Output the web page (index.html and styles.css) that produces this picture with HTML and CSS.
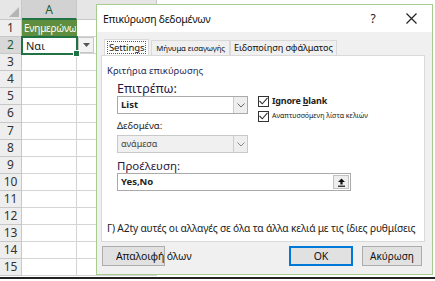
FILE: index.html
```html
<!DOCTYPE html>
<html lang="el">
<head>
    <meta charset="UTF-8">
    <title>Επικύρωση δεδομένων</title>
    <link rel="stylesheet" href="styles.css">
</head>
<body>
    <div class="workbook">
        <div class="sheet">
            <div class="hd corner"><span class="corner-tri"></span></div>
            <div class="hd col selected">A</div>
            <div class="hd col"></div>

            <div class="rn">1</div><div class="cell header-cell">Ενημερώνω</div><div class="cell"></div>
            <div class="rn row-sel">2</div><div class="cell active-cell">Ναι<span class="fill-handle"></span></div><div class="cell"><span class="cell-drop"><svg width="7" height="4" viewBox="0 0 7 4"><path d="M0 0h7L3.5 4z" fill="#555"/></svg></span></div>
            <div class="rn">3</div><div class="cell"></div><div class="cell"></div>
            <div class="rn">4</div><div class="cell"></div><div class="cell"></div>
            <div class="rn">5</div><div class="cell"></div><div class="cell"></div>
            <div class="rn">6</div><div class="cell"></div><div class="cell"></div>
            <div class="rn">7</div><div class="cell"></div><div class="cell"></div>
            <div class="rn">8</div><div class="cell"></div><div class="cell"></div>
            <div class="rn">9</div><div class="cell"></div><div class="cell"></div>
            <div class="rn">10</div><div class="cell"></div><div class="cell"></div>
            <div class="rn">11</div><div class="cell"></div><div class="cell"></div>
            <div class="rn">12</div><div class="cell"></div><div class="cell"></div>
            <div class="rn">13</div><div class="cell"></div><div class="cell"></div>
            <div class="rn">14</div><div class="cell"></div><div class="cell"></div>
            <div class="rn">15</div><div class="cell"></div><div class="cell"></div>
        </div>

        <div class="dialog">
            <div class="title-bar">
                <span class="title">Επικύρωση δεδομένων</span>
                <span class="help">?</span>
                <span class="close">
                    <svg width="11" height="11" viewBox="0 0 11 11"><path d="M0.5 0.5l10 10M10.5 0.5l-10 10" stroke="#222" stroke-width="1.2"/></svg>
                </span>
            </div>

            <div class="tabs">
                <div class="tab active"><span class="focus">Settings</span></div>
                <div class="tab small">Μήνυμα εισαγωγής</div>
                <div class="tab">Ειδοποίηση σφάλματος</div>
            </div>

            <div class="panel">
                <div class="group-label">Κριτήρια επικύρωσης</div>
                <div class="criteria">
                    <div class="left-col">
                        <div class="label-big">Επιτρέπω:</div>
                        <div class="combo">
                            <span class="combo-value bold">List</span>
                            <span class="combo-btn"><svg width="8" height="5" viewBox="0 0 8 5"><path d="M0.5 0.5L4 4l3.5-3.5" fill="none" stroke="#666"/></svg></span>
                        </div>
                        <div class="label-small">Δεδομένα:</div>
                        <div class="combo disabled">
                            <span class="combo-value">ανάμεσα</span>
                            <span class="combo-btn"><svg width="8" height="5" viewBox="0 0 8 5"><path d="M0.5 0.5L4 4l3.5-3.5" fill="none" stroke="#888"/></svg></span>
                        </div>
                    </div>
                    <div class="checks">
                        <label class="check">
                            <span class="box"><svg width="9" height="8" viewBox="0 0 9 8"><path d="M0.5 4l2.8 2.8L8.5 0.8" fill="none" stroke="#333" stroke-width="1.1"/></svg></span>
                            <span class="check-text bold">Ignore <u>b</u>lank</span>
                        </label>
                        <label class="check">
                            <span class="box"><svg width="9" height="8" viewBox="0 0 9 8"><path d="M0.5 4l2.8 2.8L8.5 0.8" fill="none" stroke="#333" stroke-width="1.1"/></svg></span>
                            <span class="check-text tiny">Αναπτυσσόμενη λίστα κελιών</span>
                        </label>
                    </div>
                </div>

                <div class="source">
                    <div class="label-mid">Προέλευση:</div>
                    <div class="source-input">
                        <span class="combo-value bold">Yes,No</span>
                        <span class="ref-btn"><svg width="9" height="9" viewBox="0 0 9 9"><path d="M4.5 0.5L8 4H5.6v2.6H3.4V4H1z" fill="#111"/><path d="M1 8.2h7" stroke="#111" stroke-width="1.2"/></svg></span>
                    </div>
                </div>

                <div class="apply">Γ) A2ty αυτές οι αλλαγές σε όλα τα άλλα κελιά με τις ίδιες ρυθμίσεις</div>
            </div>

            <div class="buttons">
                <button class="btn clear">Απαλοιφή όλων</button>
                <span class="spacer"></span>
                <button class="btn primary">OK</button>
                <button class="btn">Ακύρωση</button>
            </div>
        </div>
    </div>
</body>
</html>
```

FILE: styles.css
```css
body {
    margin: 0;
    width: 435px;
    height: 281px;
    overflow: hidden;
    background: #fff;
    font-family: "Noto Sans", "Liberation Sans", sans-serif;
    color: #222;
}
.workbook {
    position: relative;
    width: 435px;
    height: 279px;
    border-bottom: 2px solid #222;
    box-sizing: border-box;
    overflow: hidden;
}

/* spreadsheet behind the dialog */
.sheet {
    display: grid;
    grid-template-columns: 22px 55px 80px;
    grid-template-rows: 20px;
    grid-auto-rows: 17.1px;
}
.hd,
.rn,
.cell {
    border-right: 1px solid #d4d4d4;
    border-bottom: 1px solid #d4d4d4;
    box-sizing: border-box;
    font-size: 12px;
    line-height: 16px;
    white-space: nowrap;
}
.hd {
    background: #e6e6e6;
    color: #444;
    text-align: center;
    line-height: 20px;
    border-color: #c8c8c8;
}
.corner {
    position: relative;
}
.corner-tri {
    position: absolute;
    right: 2px;
    bottom: 2px;
    border-left: 10px solid transparent;
    border-bottom: 10px solid #b5b5b5;
}
.hd.selected {
    background: #d2d2d2;
    color: #1e5c33;
    border-bottom: 2px solid #217346;
}
.rn {
    background: #eeeeee;
    color: #333;
    text-align: center;
    border-color: #c8c8c8;
}
.rn.row-sel {
    background: #d8d8d8;
    color: #1e5c33;
}
.header-cell {
    background: #5e8e3e;
    color: #fff;
    font-size: 10px;
    letter-spacing: -0.2px;
    padding-left: 2px;
    overflow: hidden;
    border-color: #5e8e3e;
}
.active-cell {
    position: relative;
    border: 2px solid #217346;
    margin: -1px 0 0 -1px;
    width: 57px;
    height: 19px;
    font-size: 11px;
    padding-left: 3px;
    z-index: 1;
}
.fill-handle {
    position: absolute;
    right: -4px;
    bottom: -4px;
    width: 5px;
    height: 5px;
    background: #217346;
    border: 1px solid #fff;
}
.cell-drop {
    display: flex;
    align-items: center;
    justify-content: center;
    width: 16px;
    height: 16px;
    margin-left: 1px;
    background: #f3f3f3;
    border: 1px solid #c6c6c6;
    box-sizing: border-box;
}

/* data validation dialog */
.dialog {
    position: absolute;
    left: 96px;
    top: 4px;
    width: 337px;
    height: 271px;
    box-sizing: border-box;
    border: 1px solid #a6cc8f;
    background: #f0f0f0;
    display: flex;
    flex-direction: column;
}
.title-bar {
    height: 27px;
    background: #fff;
    display: flex;
    align-items: center;
    font-size: 10.5px;
}
.title {
    flex: 1;
    padding-left: 6px;
    color: #111;
    letter-spacing: -0.25px;
}
.help {
    width: 20px;
    text-align: center;
    font-size: 12px;
    margin-right: 18px;
}
.close {
    width: 20px;
    display: flex;
    justify-content: center;
    margin-right: 11px;
}

.tabs {
    display: flex;
    margin: 8px 0 0 7px;
    height: 15px;
    align-items: flex-end;
}
.tab {
    font-size: 9.2px;
    line-height: 14px;
    padding: 0 3px;
    border: 1px solid #d9d9d9;
    border-bottom: none;
    background: #f0f0f0;
    color: #111;
    white-space: nowrap;
    letter-spacing: -0.1px;
}
.tab.small {
    font-size: 7.8px;
    padding: 0 4px;
}
.tab.active {
    background: #fff;
    height: 15px;
    padding: 0 2px;
    margin-right: 2px;
    font-size: 9.5px;
}
.focus {
    display: inline-block;
    border: 1px dotted #555;
    line-height: 11px;
    padding: 0 1px;
    margin-top: 1px;
}

.panel {
    margin: 0 7px 0 4px;
    height: 187px;
    background: #fff;
    border: 1px solid #d9d9d9;
    box-sizing: border-box;
    position: relative;
}
.group-label {
    font-size: 9.5px;
    color: #1f2a55;
    margin: 9px 0 0 5px;
    line-height: 12px;
}
.criteria {
    display: flex;
    margin-left: 15px;
}
.left-col {
    width: 131px;
}
.label-big {
    font-size: 12.5px;
    line-height: 15px;
    margin-top: 4px;
    color: #2b1740;
}
.label-small {
    font-size: 9.5px;
    line-height: 12px;
    margin-top: 6px;
    color: #222;
}
.label-mid {
    font-size: 11.5px;
    line-height: 14px;
    color: #2b1740;
}
.combo {
    display: flex;
    height: 18px;
    border: 1px solid #aaa;
    box-sizing: border-box;
    background: #fff;
    align-items: stretch;
}
.combo.disabled {
    background: #f0f0f0;
    border-color: #c9c9c9;
    margin-top: 3px;
}
.combo-value {
    flex: 1;
    font-size: 9.5px;
    line-height: 16px;
    padding-left: 3px;
    color: #222;
}
.combo.disabled .combo-value {
    color: #444;
    font-size: 9px;
}
.bold {
    font-weight: bold;
}
.combo-btn {
    width: 13px;
    display: flex;
    align-items: center;
    justify-content: center;
    background: #eeeeee;
    border-left: 1px solid #ccc;
}
.checks {
    margin: 18px 0 0 10px;
    display: flex;
    flex-direction: column;
    gap: 3px;
}
.check {
    display: flex;
    align-items: center;
    gap: 3px;
}
.box {
    width: 11px;
    height: 11px;
    box-sizing: border-box;
    border: 1px solid #333;
    background: #fff;
    display: flex;
    align-items: center;
    justify-content: center;
}
.check-text {
    font-size: 9px;
    line-height: 12px;
    letter-spacing: -0.2px;
}
.check-text.tiny {
    font-size: 7px;
    letter-spacing: 0;
}
.source {
    margin: 6px 0 0 15px;
}
.source-input {
    display: flex;
    width: 234px;
    height: 18px;
    border: 1px solid #aaa;
    box-sizing: border-box;
    align-items: center;
}
.ref-btn {
    width: 16px;
    height: 14px;
    margin-right: 1px;
    display: flex;
    align-items: center;
    justify-content: center;
    background: #eeeeee;
    border: 1px solid #c2c2c2;
    box-sizing: border-box;
}
.apply {
    position: absolute;
    left: 5px;
    bottom: 6px;
    font-size: 10.2px;
    letter-spacing: -0.15px;
    white-space: nowrap;
    color: #222;
}

.buttons {
    display: flex;
    align-items: center;
    margin: 4px 10px 0 5px;
    gap: 9px;
}
.spacer {
    flex: 1;
}
.btn {
    font-family: inherit;
    font-size: 10px;
    height: 20px;
    width: 60px;
    padding: 0;
    background: #e1e1e1;
    border: 1px solid #adadad;
    color: #111;
    white-space: nowrap;
}
.btn.clear {
    width: 63px;
    text-align: left;
    padding-left: 13px;
    overflow: visible;
    font-size: 10.5px;
    letter-spacing: -0.1px;
}
.btn.primary {
    width: 64px;
    border: 2px solid #0078d7;
    font-size: 10.5px;
}
```
